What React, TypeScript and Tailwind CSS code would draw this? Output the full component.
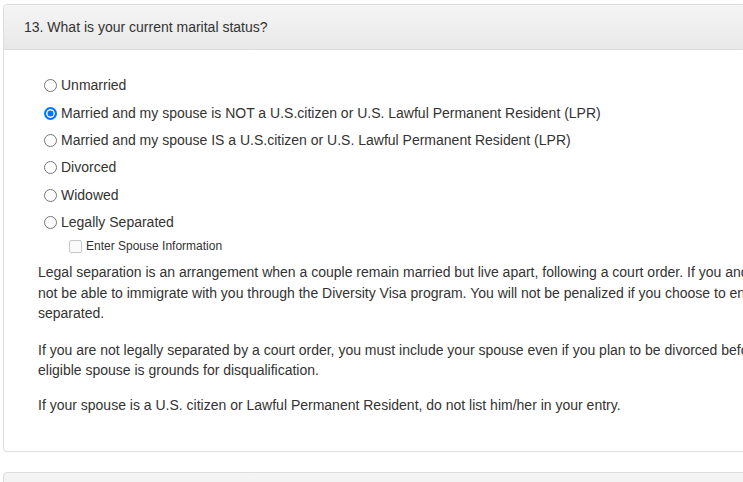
import React from "react";

const options = [
  "Unmarried",
  "Married and my spouse is NOT a U.S.citizen or U.S. Lawful Permanent Resident (LPR)",
  "Married and my spouse IS a U.S.citizen or U.S. Lawful Permanent Resident (LPR)",
  "Divorced",
  "Widowed",
  "Legally Separated",
];

export default function App() {
  return (
    <div
      className="w-[743px] h-[482px] overflow-hidden bg-white text-[#333] text-[14px]"
      style={{ fontFamily: '"Liberation Sans", Arial, Helvetica, sans-serif' }}
    >
      <div className="pt-[4px] pl-[3px]">
        <div className="w-[1000px] border border-[#ddd] rounded-[4px]">
          <div className="h-[45px] flex items-center pl-[20px] bg-gradient-to-b from-[#f5f5f5] to-[#e8e8e8] border-b border-[#ddd] rounded-t-[4px]">
            13. What is your current marital status?
          </div>
          <div className="pt-[22px] pl-[34px] pb-[19px]">
            <div className="pl-[2px] flex flex-col">
              {options.map((o, i) => (
                <label key={o} className="h-[27.4px] flex items-center">
                  <input
                    type="radio"
                    name="marital"
                    defaultChecked={i === 1}
                    className="appearance-none shrink-0 w-[13px] h-[13px] m-0 ml-[4px] mr-[4px] rounded-full border border-[#767676] bg-white checked:border-2 checked:border-[#0075ff] checked:bg-[#0075ff] checked:shadow-[inset_0_0_0_1.5px_white]"
                  />
                  <span>{o}</span>
                </label>
              ))}
              <label className="h-[20px] flex items-center pl-[29px] text-[12px]">
                <input
                  type="checkbox"
                  disabled
                  className="appearance-none shrink-0 w-[13px] h-[13px] m-0 mr-[4px] rounded-[2px] border border-[#c8c8c8] bg-[#fafafa]"
                />
                <span>Enter Spouse Information</span>
              </label>
            </div>
            <div className="mt-[6px] leading-[20.4px] whitespace-nowrap">
              <p className="mb-[16px]">
                Legal separation is an arrangement when a couple remain married but live apart, following a court order. If you and your spouse are legally separated, your spouse will
                <br />
                not be able to immigrate with you through the Diversity Visa program. You will not be penalized if you choose to enter the name of a spouse from whom you are legally
                <br />
                separated.
              </p>
              <p className="mb-[15px]">
                If you are not legally separated by a court order, you must include your spouse even if you plan to be divorced before you apply for the Diversity Visa. Failure to list your
                <br />
                eligible spouse is grounds for disqualification.
              </p>
              <p className="mb-[16px]">
                If your spouse is a U.S. citizen or Lawful Permanent Resident, do not list him/her in your entry.
              </p>
            </div>
          </div>
        </div>
        <div className="mt-[20px] w-[1000px] h-[60px] border border-[#ddd] rounded-[4px] bg-gradient-to-b from-[#f5f5f5] to-[#e8e8e8]" />
      </div>
    </div>
  );
}
